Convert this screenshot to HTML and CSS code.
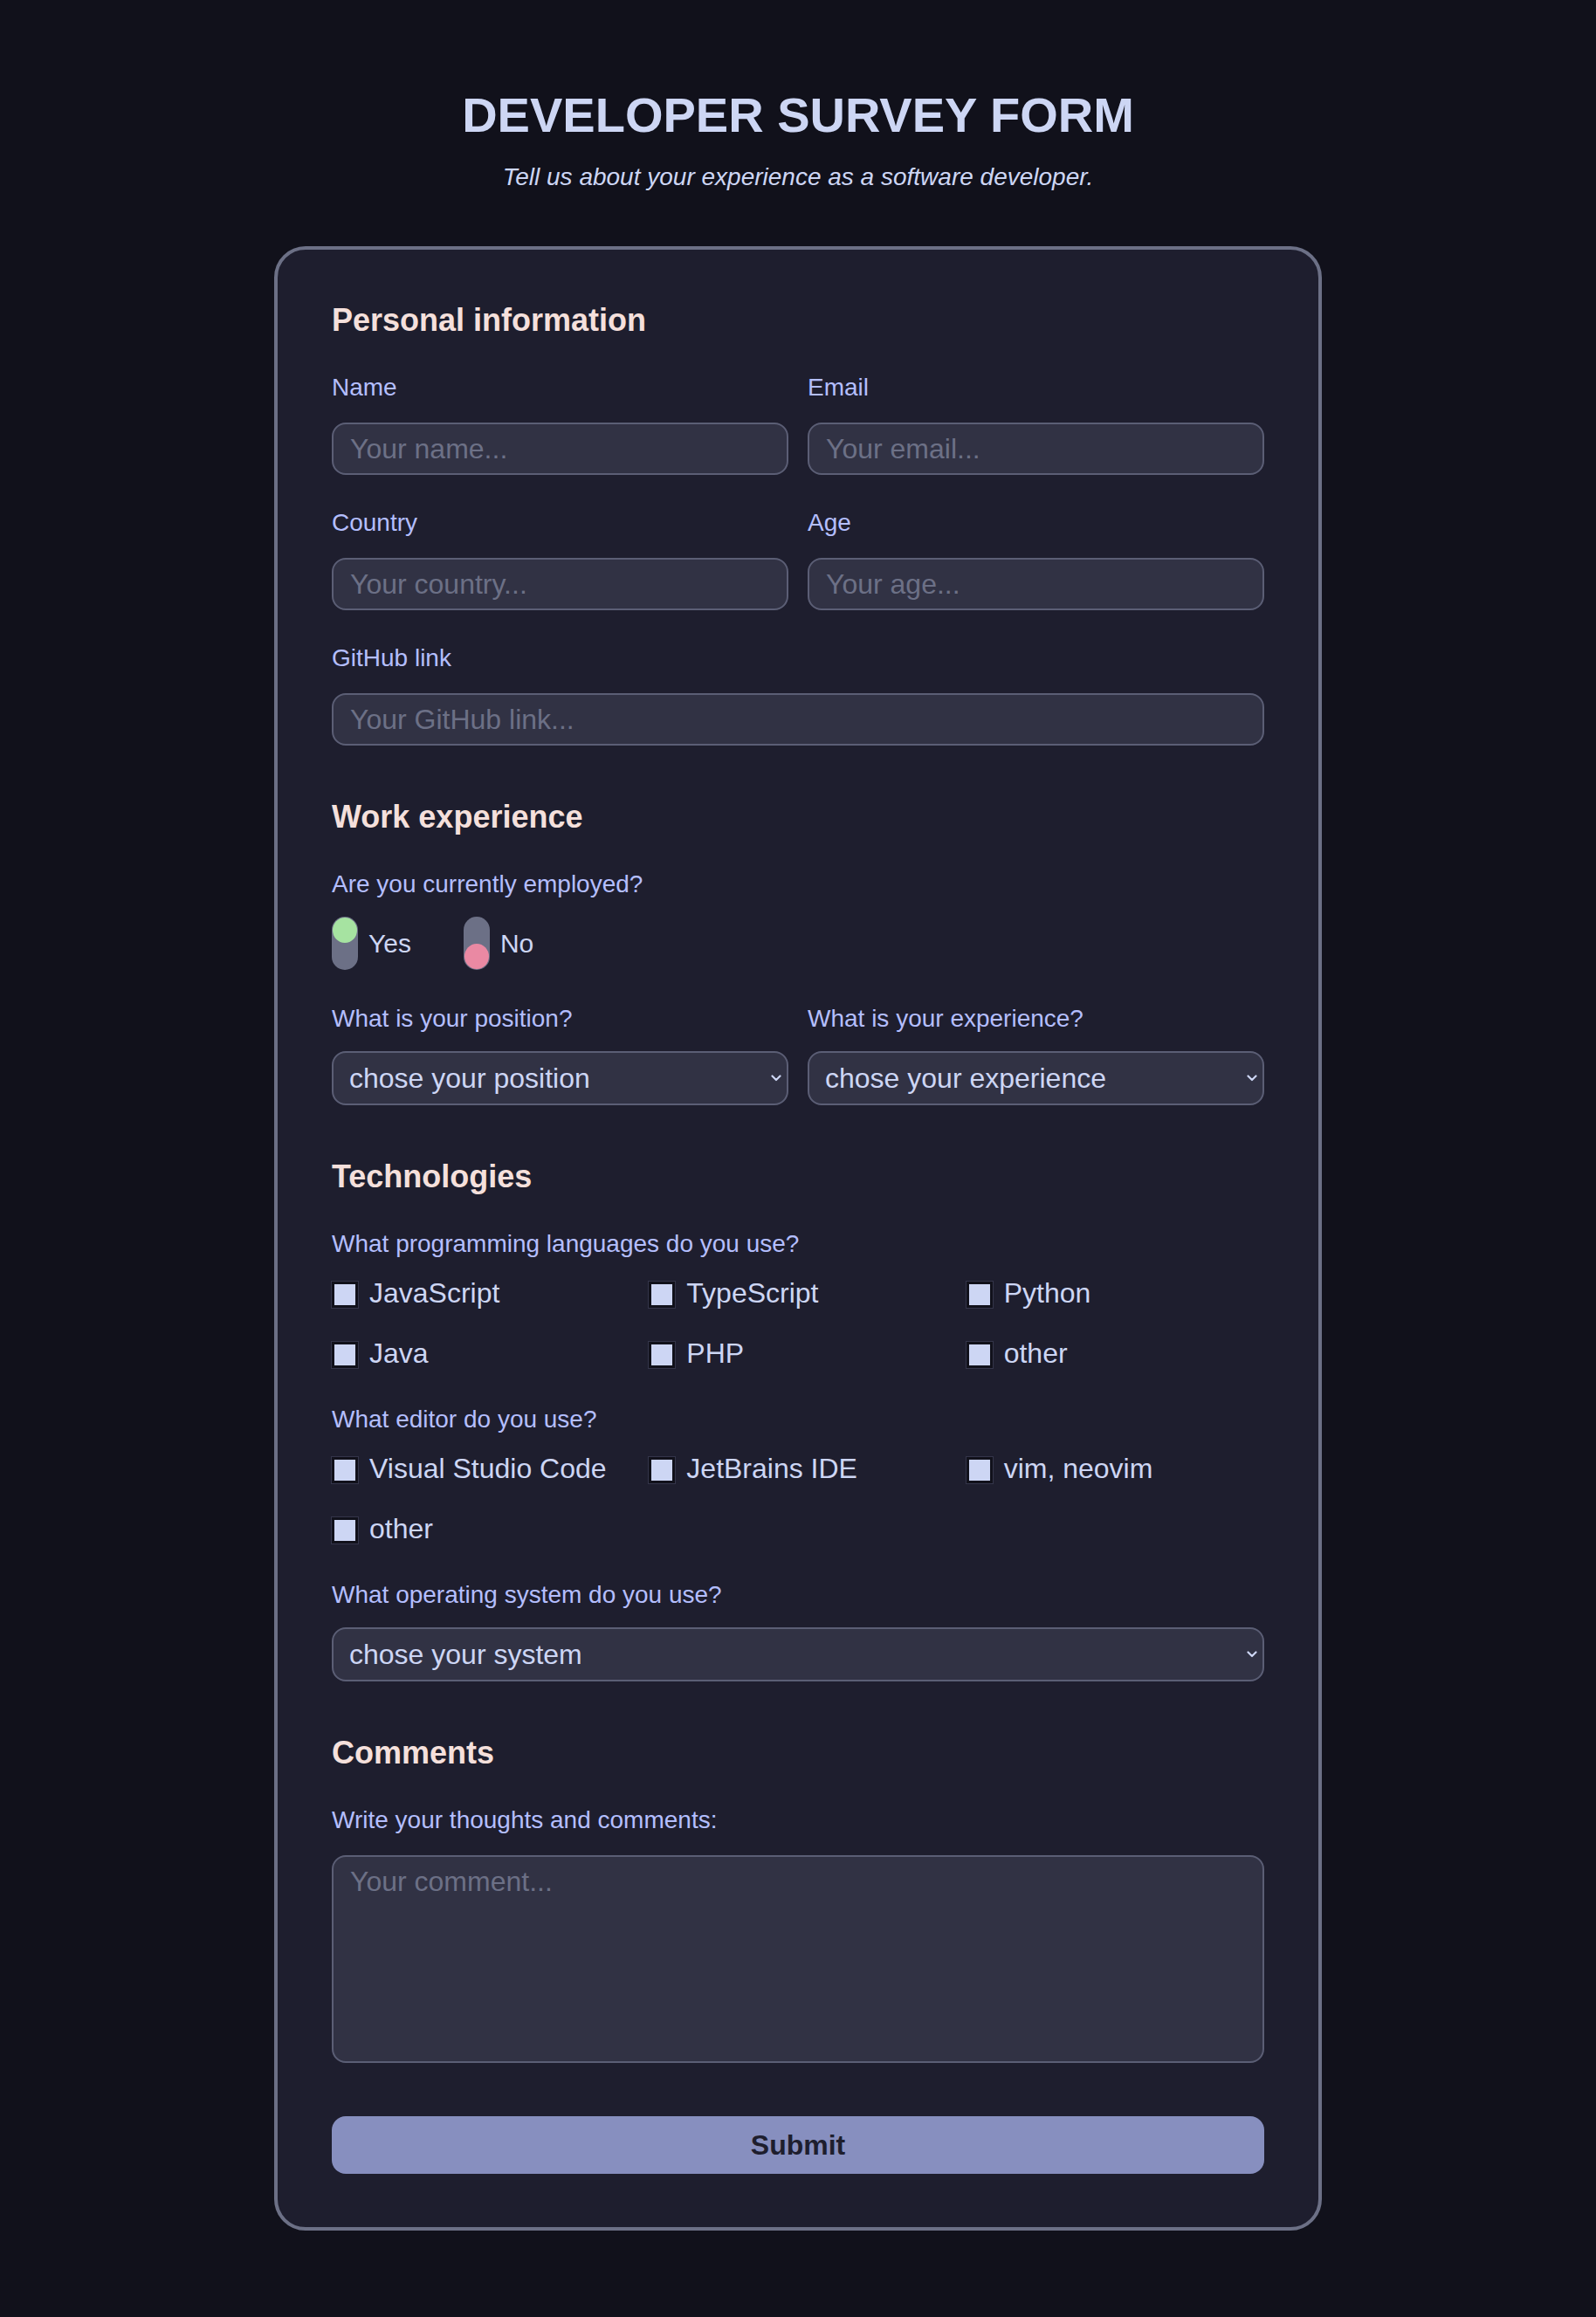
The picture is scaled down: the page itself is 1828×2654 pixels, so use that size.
FILE: index.html
```html
<!DOCTYPE html>
<html lang="en">
<head>
<meta charset="utf-8">
<title>Developer Survey Form</title>
<link rel="stylesheet" href="styles.css">
</head>
<body>
<header class="page-head">
  <h1 class="title">DEVELOPER SURVEY FORM</h1>
  <p class="subtitle">Tell us about your experience as a software developer.</p>
</header>
<form class="card">
  <section class="section">
    <h2 class="section-title">Personal information</h2>
    <div class="grid-2">
      <div class="field">
        <label class="label" for="name">Name</label>
        <input class="input" id="name" type="text" placeholder="Your name...">
      </div>
      <div class="field">
        <label class="label" for="email">Email</label>
        <input class="input" id="email" type="email" placeholder="Your email...">
      </div>
      <div class="field">
        <label class="label" for="country">Country</label>
        <input class="input" id="country" type="text" placeholder="Your country...">
      </div>
      <div class="field">
        <label class="label" for="age">Age</label>
        <input class="input" id="age" type="text" placeholder="Your age...">
      </div>
      <div class="field span-2">
        <label class="label" for="github">GitHub link</label>
        <input class="input" id="github" type="text" placeholder="Your GitHub link...">
      </div>
    </div>
  </section>

  <section class="section">
    <h2 class="section-title">Work experience</h2>
    <div class="stack">
      <div class="field field-tight">
        <span class="label">Are you currently employed?</span>
        <div class="toggles">
          <label class="toggle-item"><span class="toggle"><span class="knob knob-yes"></span></span><span class="toggle-text">Yes</span></label>
          <label class="toggle-item"><span class="toggle"><span class="knob knob-no"></span></span><span class="toggle-text">No</span></label>
        </div>
      </div>
      <div class="grid-2">
        <div class="field field-tight">
          <label class="label" for="position">What is your position?</label>
          <div class="select-wrap">
            <select class="select" id="position"><option>chose your position</option></select>
            <svg class="chevron" width="12" height="8" viewBox="0 0 12 8" aria-hidden="true"><path d="M1.5 1.5 L6 6 L10.5 1.5" fill="none" stroke="#cdd6f4" stroke-width="2.2" stroke-linecap="round" stroke-linejoin="round"/></svg>
          </div>
        </div>
        <div class="field field-tight">
          <label class="label" for="experience">What is your experience?</label>
          <div class="select-wrap">
            <select class="select" id="experience"><option>chose your experience</option></select>
            <svg class="chevron" width="12" height="8" viewBox="0 0 12 8" aria-hidden="true"><path d="M1.5 1.5 L6 6 L10.5 1.5" fill="none" stroke="#cdd6f4" stroke-width="2.2" stroke-linecap="round" stroke-linejoin="round"/></svg>
          </div>
        </div>
      </div>
    </div>
  </section>

  <section class="section">
    <h2 class="section-title">Technologies</h2>
    <div class="stack stack-tech">
      <div class="field field-options">
        <span class="label">What programming languages do you use?</span>
        <div class="options">
          <label class="option"><span class="box"></span>JavaScript</label>
          <label class="option"><span class="box"></span>TypeScript</label>
          <label class="option"><span class="box"></span>Python</label>
          <label class="option"><span class="box"></span>Java</label>
          <label class="option"><span class="box"></span>PHP</label>
          <label class="option"><span class="box"></span>other</label>
        </div>
      </div>
      <div class="field field-options">
        <span class="label">What editor do you use?</span>
        <div class="options">
          <label class="option"><span class="box"></span>Visual Studio Code</label>
          <label class="option"><span class="box"></span>JetBrains IDE</label>
          <label class="option"><span class="box"></span>vim, neovim</label>
          <label class="option"><span class="box"></span>other</label>
        </div>
      </div>
      <div class="field field-tight">
        <label class="label" for="os">What operating system do you use?</label>
        <div class="select-wrap">
          <select class="select" id="os"><option>chose your system</option></select>
          <svg class="chevron" width="12" height="8" viewBox="0 0 12 8" aria-hidden="true"><path d="M1.5 1.5 L6 6 L10.5 1.5" fill="none" stroke="#cdd6f4" stroke-width="2.2" stroke-linecap="round" stroke-linejoin="round"/></svg>
        </div>
      </div>
    </div>
  </section>

  <section class="section">
    <h2 class="section-title">Comments</h2>
    <div class="field">
      <label class="label" for="comment">Write your thoughts and comments:</label>
      <textarea class="textarea" id="comment" placeholder="Your comment..."></textarea>
    </div>
  </section>

  <button class="submit" type="button">Submit</button>
</form>
</body>
</html>
```

FILE: styles.css
```css
* {
  box-sizing: border-box;
}

html {
  background: #11111b;
}

body {
  margin: 0;
  padding: 100px 0 101px;
  background: #11111b;
  font-family: "Liberation Sans", Arial, sans-serif;
  color: #cdd6f4;
}

.page-head {
  text-align: center;
  margin-bottom: 63px;
}

.title {
  margin: 0;
  font-size: 56px;
  line-height: 64px;
  font-weight: 700;
  color: #cdd6f4;
}

.subtitle {
  margin: 23px 0 0;
  font-size: 28px;
  line-height: 32px;
  font-style: italic;
  color: #cdd6f4;
}

.card {
  width: 1200px;
  margin: 0 auto;
  padding: 60px 62px 61px;
  background: #1e1e2e;
  border: 4px solid #6c7086;
  border-radius: 36px;
  display: flex;
  flex-direction: column;
  gap: 61px;
}

.section-title {
  margin: 0 0 40px;
  font-size: 36px;
  line-height: 42px;
  font-weight: 700;
  color: #f5e0dc;
}

.grid-2 {
  display: grid;
  grid-template-columns: 1fr 1fr;
  column-gap: 22px;
  row-gap: 39px;
}

.span-2 {
  grid-column: 1 / 3;
}

.stack {
  display: flex;
  flex-direction: column;
  gap: 40px;
}

.stack-tech {
  gap: 41px;
}

.field {
  display: flex;
  flex-direction: column;
  gap: 24px;
}

.field-tight {
  gap: 21px;
}

.field-options {
  gap: 22px;
}

.label {
  display: block;
  font-size: 28px;
  line-height: 32px;
  color: #b4befe;
}

.input,
.select,
.textarea {
  width: 100%;
  font-family: "Liberation Sans", Arial, sans-serif;
  font-size: 32px;
  color: #cdd6f4;
  background: #313244;
  border: 2px solid #5b5e75;
  border-radius: 16px;
  outline: none;
}

.input {
  height: 60px;
  padding: 0 19px;
}

.input::placeholder,
.textarea::placeholder {
  color: #6c7086;
  opacity: 1;
}

.select-wrap {
  position: relative;
}

.select {
  display: block;
  height: 62px;
  padding: 0 36px 0 18px;
  appearance: none;
  -webkit-appearance: none;
}

.chevron {
  position: absolute;
  right: 8px;
  top: 27px;
  pointer-events: none;
}

.textarea {
  display: block;
  height: 238px;
  padding: 10px 19px;
  resize: none;
  line-height: 37px;
}

.toggles {
  display: flex;
  gap: 60px;
  height: 61px;
  align-items: center;
}

.toggle-item {
  display: flex;
  align-items: center;
  gap: 12px;
}

.toggle {
  position: relative;
  width: 30px;
  height: 61px;
  border-radius: 15px;
  background: #6c7086;
  display: block;
}

.knob {
  position: absolute;
  left: 1px;
  width: 28px;
  height: 29px;
  border-radius: 50%;
}

.knob-yes {
  top: 1px;
  background: #a6e3a1;
}

.knob-no {
  bottom: 1px;
  background: #ea89a3;
}

.toggle-text {
  font-size: 30px;
  line-height: 36px;
  color: #cdd6f4;
}

.options {
  display: grid;
  grid-template-columns: repeat(3, 1fr);
  column-gap: 22px;
  row-gap: 32px;
}

.option {
  display: flex;
  align-items: center;
  gap: 13px;
  font-size: 32px;
  line-height: 37px;
  color: #cdd6f4;
  white-space: nowrap;
}

.box {
  flex: none;
  width: 30px;
  height: 30px;
  background: #cdd6f4;
  border: 3px solid #11111b;
  box-shadow: 0 0 0 1px #34354a;
  margin-top: 3px;
}

.submit {
  height: 66px;
  width: 100%;
  border: none;
  border-radius: 16px;
  background: #878fbf;
  color: #1e1e2e;
  font-family: "Liberation Sans", Arial, sans-serif;
  font-size: 32px;
  font-weight: 700;
}
```
